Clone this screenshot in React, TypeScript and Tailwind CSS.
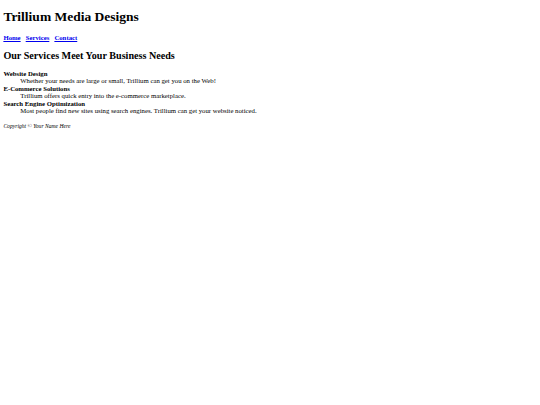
import React from 'react';

const services = [
  { title: 'Website Design', text: 'Whether your needs are large or small, Trillium can get you on the Web!' },
  { title: 'E-Commerce Solutions', text: 'Trillium offers quick entry into the e-commerce marketplace.' },
  { title: 'Search Engine Optimization', text: 'Most people find new sites using search engines. Trillium can get your website noticed.' },
];

const App: React.FC = () => {
  return (
    <div className="min-h-[405px] bg-white px-[3.375px] py-[9.05px] text-black" style={{ fontFamily: '"Liberation Serif", "Times New Roman", serif' }}>
      <h1 className="m-0 text-[13.5px] font-bold leading-[15.5px]">Trillium Media Designs</h1>

      <nav className="mt-[9.05px] text-[6.75px] font-bold leading-[7.5px]">
        <a href="#" className="text-[#0000ee] underline">Home</a>
        {'\u00a0\u00a0 '}
        <a href="#" className="text-[#0000ee] underline">Services</a>
        {'\u00a0\u00a0 '}
        <a href="#" className="text-[#0000ee] underline">Contact</a>
      </nav>

      <h2 className="mt-[8.9px] text-[10.125px] font-bold leading-[11.6px]">Our Services Meet Your Business Needs</h2>

      <dl className="mt-[8.4px] text-[6.75px] leading-[7.5px]">
        {services.map((s) => (
          <React.Fragment key={s.title}>
            <dt className="font-bold">{s.title}</dt>
            <dd className="ml-[16.875px]">{s.text}</dd>
          </React.Fragment>
        ))}
      </dl>

      <footer className="mt-[8.25px] text-[5.625px] italic leading-[6.5px]">
        Copyright &copy; Your Name Here
      </footer>
    </div>
  );
};

export default App;
